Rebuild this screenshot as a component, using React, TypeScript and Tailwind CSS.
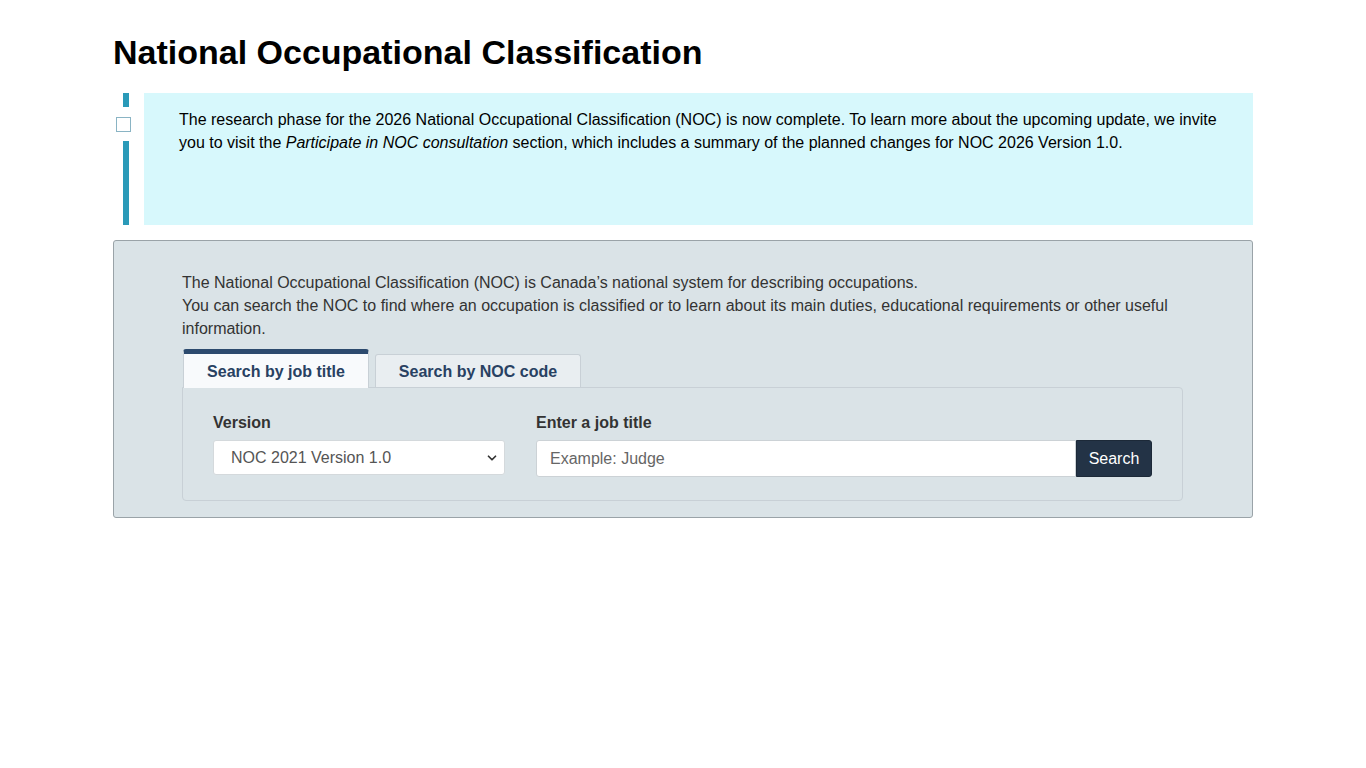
import { ChevronDown } from "lucide-react";

export default function App() {
  return (
    <div className="min-h-screen bg-white font-['Liberation_Sans',Arial,sans-serif] text-[#333]">
      <div className="mx-auto w-[1140px] pt-[31px]">
        <h1 className="text-[34px] leading-[42px] font-bold text-black">
          National Occupational Classification
        </h1>

        {/* Avis */}
        <div className="mt-[20px] flex h-[132px]">
          <div className="flex w-[31px] flex-col items-start">
            <div className="ml-[10px] h-[14px] w-[6px] bg-[#2a9ab8]" />
            <div className="ml-[3px] mt-[10px] h-[15px] w-[15px] border border-[#8ab4c4] bg-white" />
            <div className="ml-[10px] mt-[9px] w-[6px] flex-1 bg-[#2a9ab8]" />
          </div>
          <div className="flex-1 bg-[#d7f8fc] pl-[35px] pr-[30px] pt-[15px] text-[16px] leading-[23px] text-black">
            The research phase for the 2026 National Occupational Classification (NOC) is now complete. To learn more about
            the upcoming update, we invite you to visit the <em className="italic">Participate in NOC consultation</em>{" "}
            section, which includes a summary of the planned changes for NOC 2026 Version 1.0.
          </div>
        </div>

        {/* Recherche */}
        <div className="mt-[15px] rounded-[3px] border border-[#9aa3a8] bg-[#dae3e7] pb-[16px] pl-[68px] pr-[69px] pt-[30px]">
          <p className="text-[16px] leading-[23px] text-[#333]">
            The National Occupational Classification (NOC) is Canada’s national system for describing occupations.
            <br />
            You can search the NOC to find where an occupation is classified or to learn about its main duties, educational
            requirements or other useful information.
          </p>

          <div className="mt-[9px] flex items-end gap-[6px] pl-px">
            <div className="relative z-10 -mb-px flex h-[39px] w-[186px] items-center justify-center rounded-t-[3px] border-t-[5px] border-x border-[#2c4a6e] border-x-[#c8d0d6] bg-[#f8fafc] pt-[1px] text-[16px] font-bold text-[#284162]">
              Search by job title
            </div>
            <div className="flex h-[33px] w-[206px] items-center justify-center rounded-t-[3px] border border-b-0 border-[#c8d0d6] bg-[#e9eef1] pt-[1px] text-[16px] font-bold text-[#284162]">
              Search by NOC code
            </div>
          </div>

          <div className="rounded-b-[4px] rounded-tr-[4px] border border-[#c8d0d6] px-[30px] pb-[23px] pt-[24px]">
            <div className="flex gap-[31px]">
              <div className="w-[293px]">
                <label className="block text-[16px] font-bold leading-[22px] text-[#333]">Version</label>
                <div className="relative mt-[6px] flex h-[35px] items-center rounded-[3px] border border-[#d4d9dc] bg-white pl-[17px] text-[16px] text-[#555]">
                  NOC 2021 Version 1.0
                  <ChevronDown className="absolute right-[5px] h-[14px] w-[14px] text-[#333]" strokeWidth={3} />
                </div>
              </div>
              <div className="flex-1">
                <label className="block text-[16px] font-bold leading-[22px] text-[#333]">Enter a job title</label>
                <div className="mt-[6px] flex h-[37px] w-[616px]">
                  <div className="flex flex-1 items-center rounded-l-[3px] border border-[#ccd2d6] bg-white pl-[13px] pt-[1px] text-[16px] text-[#666]">
                    Example: Judge
                  </div>
                  <div className="flex w-[76px] items-center justify-center rounded-r-[3px] border border-[#1c2938] bg-[#233346] text-[16px] text-white">
                    Search
                  </div>
                </div>
              </div>
            </div>
          </div>
        </div>
      </div>
    </div>
  );
}
